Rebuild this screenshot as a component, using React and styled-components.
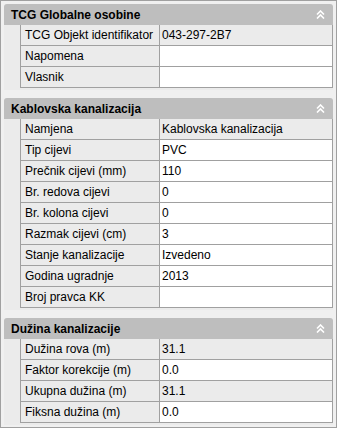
import React from 'react';
import styled, { createGlobalStyle } from 'styled-components';

const GlobalStyle = createGlobalStyle`
  html, body {
    margin: 0;
    padding: 0;
    background: #f0f0f0;
  }
  body {
    font-family: "Liberation Sans", Arial, sans-serif;
    font-size: 12px;
    color: #000;
  }
`;

const Window = styled.div`
  width: 337px;
  height: 428px;
  box-sizing: border-box;
  border: 1px solid #a0a0a0;
  background: #f0f0f0;
  padding: 3px 3px 0 3px;
  display: flex;
  flex-direction: column;
  gap: 8px;
`;

const Section = styled.div`
  background: #ebebeb;
  border-radius: 3px 3px 0 0;
  padding-bottom: 2px;
`;

const Header = styled.div`
  height: 21px;
  background: #bebebe;
  border-radius: 3px 3px 0 0;
  display: flex;
  align-items: center;
  justify-content: space-between;
  padding: 0 8px 0 7px;
  font-weight: bold;
  font-size: 12px;
`;

const Rows = styled.div`
  margin-left: 16px;
  border-left: 1px solid #a0a0a0;
  border-right: 1px solid #a0a0a0;
`;

const Row = styled.div`
  display: grid;
  grid-template-columns: 139px 1fr;
  height: 21px;
  box-sizing: border-box;
  border-bottom: 1px solid #a0a0a0;
`;

const Label = styled.div`
  background: #ebebeb;
  border-right: 1px solid #a0a0a0;
  padding-left: 4px;
  display: flex;
  align-items: center;
  white-space: nowrap;
  overflow: hidden;
`;

const Value = styled.div`
  background: ${p => (p.$readonly ? '#ebebeb' : '#ffffff')};
  padding-left: 2px;
  display: flex;
  align-items: center;
  white-space: nowrap;
  overflow: hidden;
`;

const Collapse = () => (
  <svg width="9" height="9" viewBox="0 0 9 9" fill="none" stroke="#fff" strokeWidth="1.6">
    <path d="M1 4.5 L4.5 1 L8 4.5" />
    <path d="M1 8.5 L4.5 5 L8 8.5" />
  </svg>
);

const sections = [
  {
    title: 'TCG Globalne osobine',
    rows: [
      ['TCG Objekt identifikator', '043-297-2B7', true],
      ['Napomena', ''],
      ['Vlasnik', ''],
    ],
  },
  {
    title: 'Kablovska kanalizacija',
    rows: [
      ['Namjena', 'Kablovska kanalizacija', true],
      ['Tip cijevi', 'PVC'],
      ['Prečnik cijevi (mm)', '110'],
      ['Br. redova cijevi', '0'],
      ['Br. kolona cijevi', '0'],
      ['Razmak cijevi (cm)', '3'],
      ['Stanje kanalizacije', 'Izvedeno'],
      ['Godina ugradnje', '2013'],
      ['Broj pravca KK', ''],
    ],
  },
  {
    title: 'Dužina kanalizacije',
    rows: [
      ['Dužina rova (m)', '31.1', true],
      ['Faktor korekcije (m)', '0.0'],
      ['Ukupna dužina (m)', '31.1', true],
      ['Fiksna dužina (m)', '0.0'],
    ],
  },
];

export default function App() {
  return (
    <>
      <GlobalStyle />
      <Window>
        {sections.map(s => (
          <Section key={s.title}>
            <Header>
              <span>{s.title}</span>
              <Collapse />
            </Header>
            <Rows>
              {s.rows.map(([label, value, ro]) => (
                <Row key={label}>
                  <Label>{label}</Label>
                  <Value $readonly={ro}>{value}</Value>
                </Row>
              ))}
            </Rows>
          </Section>
        ))}
      </Window>
    </>
  );
}
